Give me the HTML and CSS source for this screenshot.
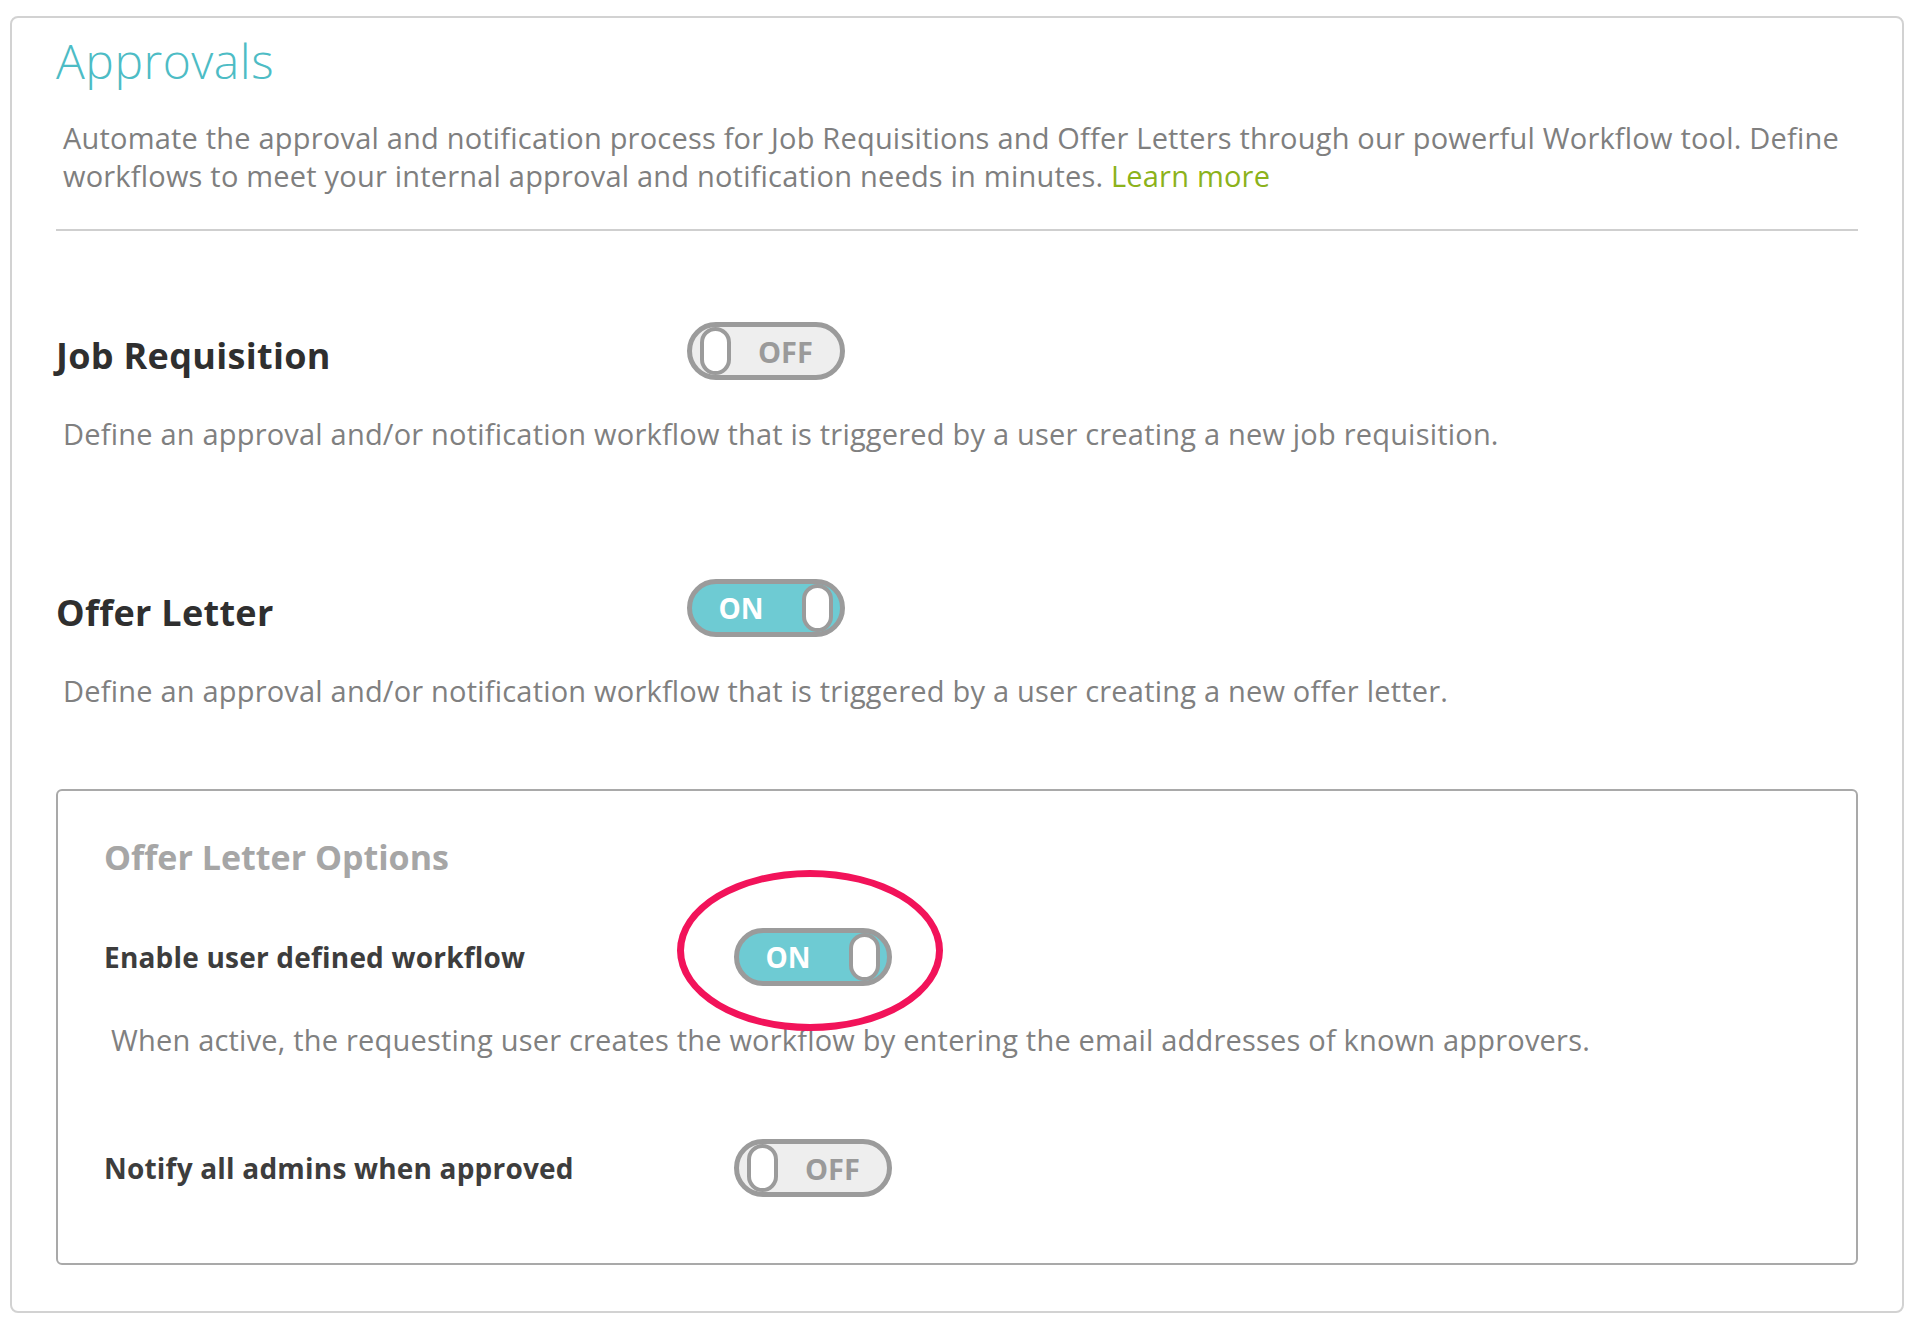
FILE: index.html
```html
<!DOCTYPE html>
<html lang="en">
<head>
<meta charset="utf-8">
<title>Approvals</title>
<link rel="stylesheet" href="styles.css">
</head>
<body>
<div class="card">
  <h1 class="title">Approvals</h1>
  <p class="intro">Automate the approval and notification process for Job Requisitions and Offer Letters through our powerful Workflow tool. Define workflows to meet your internal approval and notification needs in minutes. <a class="link" href="#">Learn more</a></p>
  <hr class="rule">

  <section class="setting setting-first">
    <div class="row">
      <h2 class="heading">Job Requisition</h2>
      <div class="toggle off"><span class="knob"></span><span class="label">OFF</span></div>
    </div>
    <p class="desc">Define an approval and/or notification workflow that is triggered by a user creating a new job requisition.</p>
  </section>

  <section class="setting setting-second">
    <div class="row">
      <h2 class="heading">Offer Letter</h2>
      <div class="toggle on"><span class="label">ON</span><span class="knob"></span></div>
    </div>
    <p class="desc">Define an approval and/or notification workflow that is triggered by a user creating a new offer letter.</p>
  </section>

  <div class="options">
    <h3 class="options-title">Offer Letter Options</h3>
    <div class="row opt-row">
      <div class="opt-label">Enable user defined workflow</div>
      <div class="toggle-wrap">
        <div class="toggle on"><span class="label">ON</span><span class="knob"></span></div>
        <span class="highlight"></span>
      </div>
    </div>
    <p class="desc opt-desc">When active, the requesting user creates the workflow by entering the email addresses of known approvers.</p>
    <div class="row opt-row opt-row-last">
      <div class="opt-label">Notify all admins when approved</div>
      <div class="toggle off"><span class="knob"></span><span class="label">OFF</span></div>
    </div>
  </div>
</div>
</body>
</html>
```
FILE: styles.css
```css
* { box-sizing: border-box; }

body {
  margin: 0;
  background: #ffffff;
  font-family: "Open Sans", "Liberation Sans", sans-serif;
  color: #808080;
}

.card {
  margin: 16px 0 0 10px;
  width: 1894px;
  height: 1297px;
  border: 2px solid #d2d2d2;
  border-radius: 8px;
  padding: 15px 44px 0 44px;
}

.title {
  margin: 0;
  font-size: 48px;
  line-height: 56px;
  font-weight: 300;
  letter-spacing: 0.5px;
  color: #4dbcc5;
}

.intro {
  margin: 30px 0 0 0;
  padding-left: 7px;
  font-size: 29px;
  line-height: 38px;
  letter-spacing: 0.2px;
  color: #7f7f7f;
}

.link {
  color: #8cb21b;
  text-decoration: none;
}

.rule {
  margin: 34px 0 0 0;
  border: 0;
  height: 2px;
  background: #cfcfcf;
}

.setting-first { margin-top: 91px; }
.setting-second { margin-top: 126px; }

.row {
  display: flex;
  align-items: center;
}

.heading {
  margin: 0;
  width: 631px;
  font-size: 36px;
  line-height: 44px;
  font-weight: 700;
  letter-spacing: 0.3px;
  color: #2f2f2f;
  position: relative;
  top: 5px;
}

.desc {
  margin: 35px 0 0 0;
  padding-left: 7px;
  font-size: 29px;
  line-height: 38px;
  letter-spacing: 0.2px;
  color: #808080;
}

.toggle {
  display: flex;
  align-items: center;
  width: 158px;
  height: 58px;
  border: 5px solid #9b9b9b;
  border-radius: 29px;
  font-weight: 700;
  font-size: 29px;
}

.toggle.off {
  background: #eeeeee;
  padding-left: 8px;
}

.toggle.on {
  background: #6ecbd3;
  padding-right: 7px;
}

.knob {
  flex: none;
  width: 31px;
  height: 48px;
  border: 4px solid #9b9b9b;
  border-radius: 16px;
  background: #ffffff;
}

.label {
  flex: 1;
  text-align: center;
  line-height: 1;
}

.toggle.off .label { color: #9a9a9a; }
.toggle.on .label { color: #ffffff; padding-right: 12px; font-size: 28px; }

.options {
  margin-top: 79px;
  border: 2px solid #a9a9a9;
  border-radius: 6px;
  padding: 46px 46px 66px 46px;
}

.options-title {
  margin: 0;
  font-size: 34px;
  line-height: 40px;
  font-weight: 700;
  color: #a6a6a6;
}

.opt-row { margin-top: 51px; }
.opt-row-last { margin-top: 80px; }

.opt-label {
  width: 630px;
  font-size: 28px;
  font-weight: 700;
  letter-spacing: 0.2px;
  color: #3d3d3d;
}

.opt-desc { margin-top: 35px; }

.toggle-wrap {
  position: relative;
}

.highlight {
  position: absolute;
  left: -57px;
  top: -58px;
  width: 266px;
  height: 161px;
  border: 7px solid #f2135a;
  border-radius: 50%;
  pointer-events: none;
}
```
